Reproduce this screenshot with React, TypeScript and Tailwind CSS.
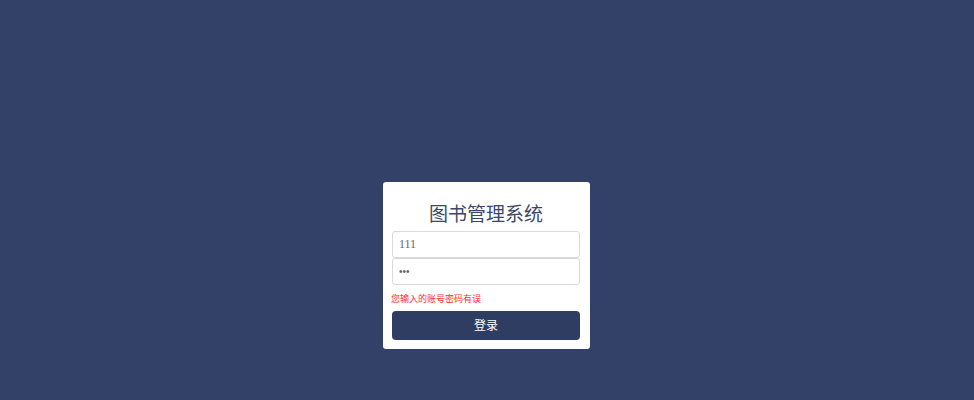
export default function App() {
  return (
    <div
      className="w-full h-[400px] bg-[#334168] flex items-end justify-center pb-[51px]"
      style={{ fontFamily: '"Liberation Sans", "Noto Sans CJK SC", sans-serif' }}
    >
      <div className="w-[207px] h-[167px] mr-[1px] bg-white rounded-[3px] pl-[9px] pr-[10px] pt-[21px] flex flex-col">
        <h1 className="text-center text-[19px] leading-[24px] text-[#3b4766] mb-[4px]">图书管理系统</h1>
        <input
          className="h-[27px] w-full border border-[#d9d9d9] rounded-[3px] px-[6px] text-[12px] text-[#666] outline-none"
          style={{ fontFamily: '"Liberation Serif", serif' }}
          defaultValue="111"
        />
        <input
          type="password"
          className="h-[27px] w-full border border-[#d9d9d9] rounded-[3px] px-[6px] text-[10px] text-[#666] outline-none"
          defaultValue="111"
        />
        <p className="text-[9px] leading-[12px] text-[#ff2b2b] mt-[8px] ml-[-1px]">您输入的账号密码有误</p>
        <button className="mt-[6px] h-[29px] w-full bg-[#2f3d62] text-white text-[12px] rounded-[4px]">登录</button>
      </div>
    </div>
  )
}
